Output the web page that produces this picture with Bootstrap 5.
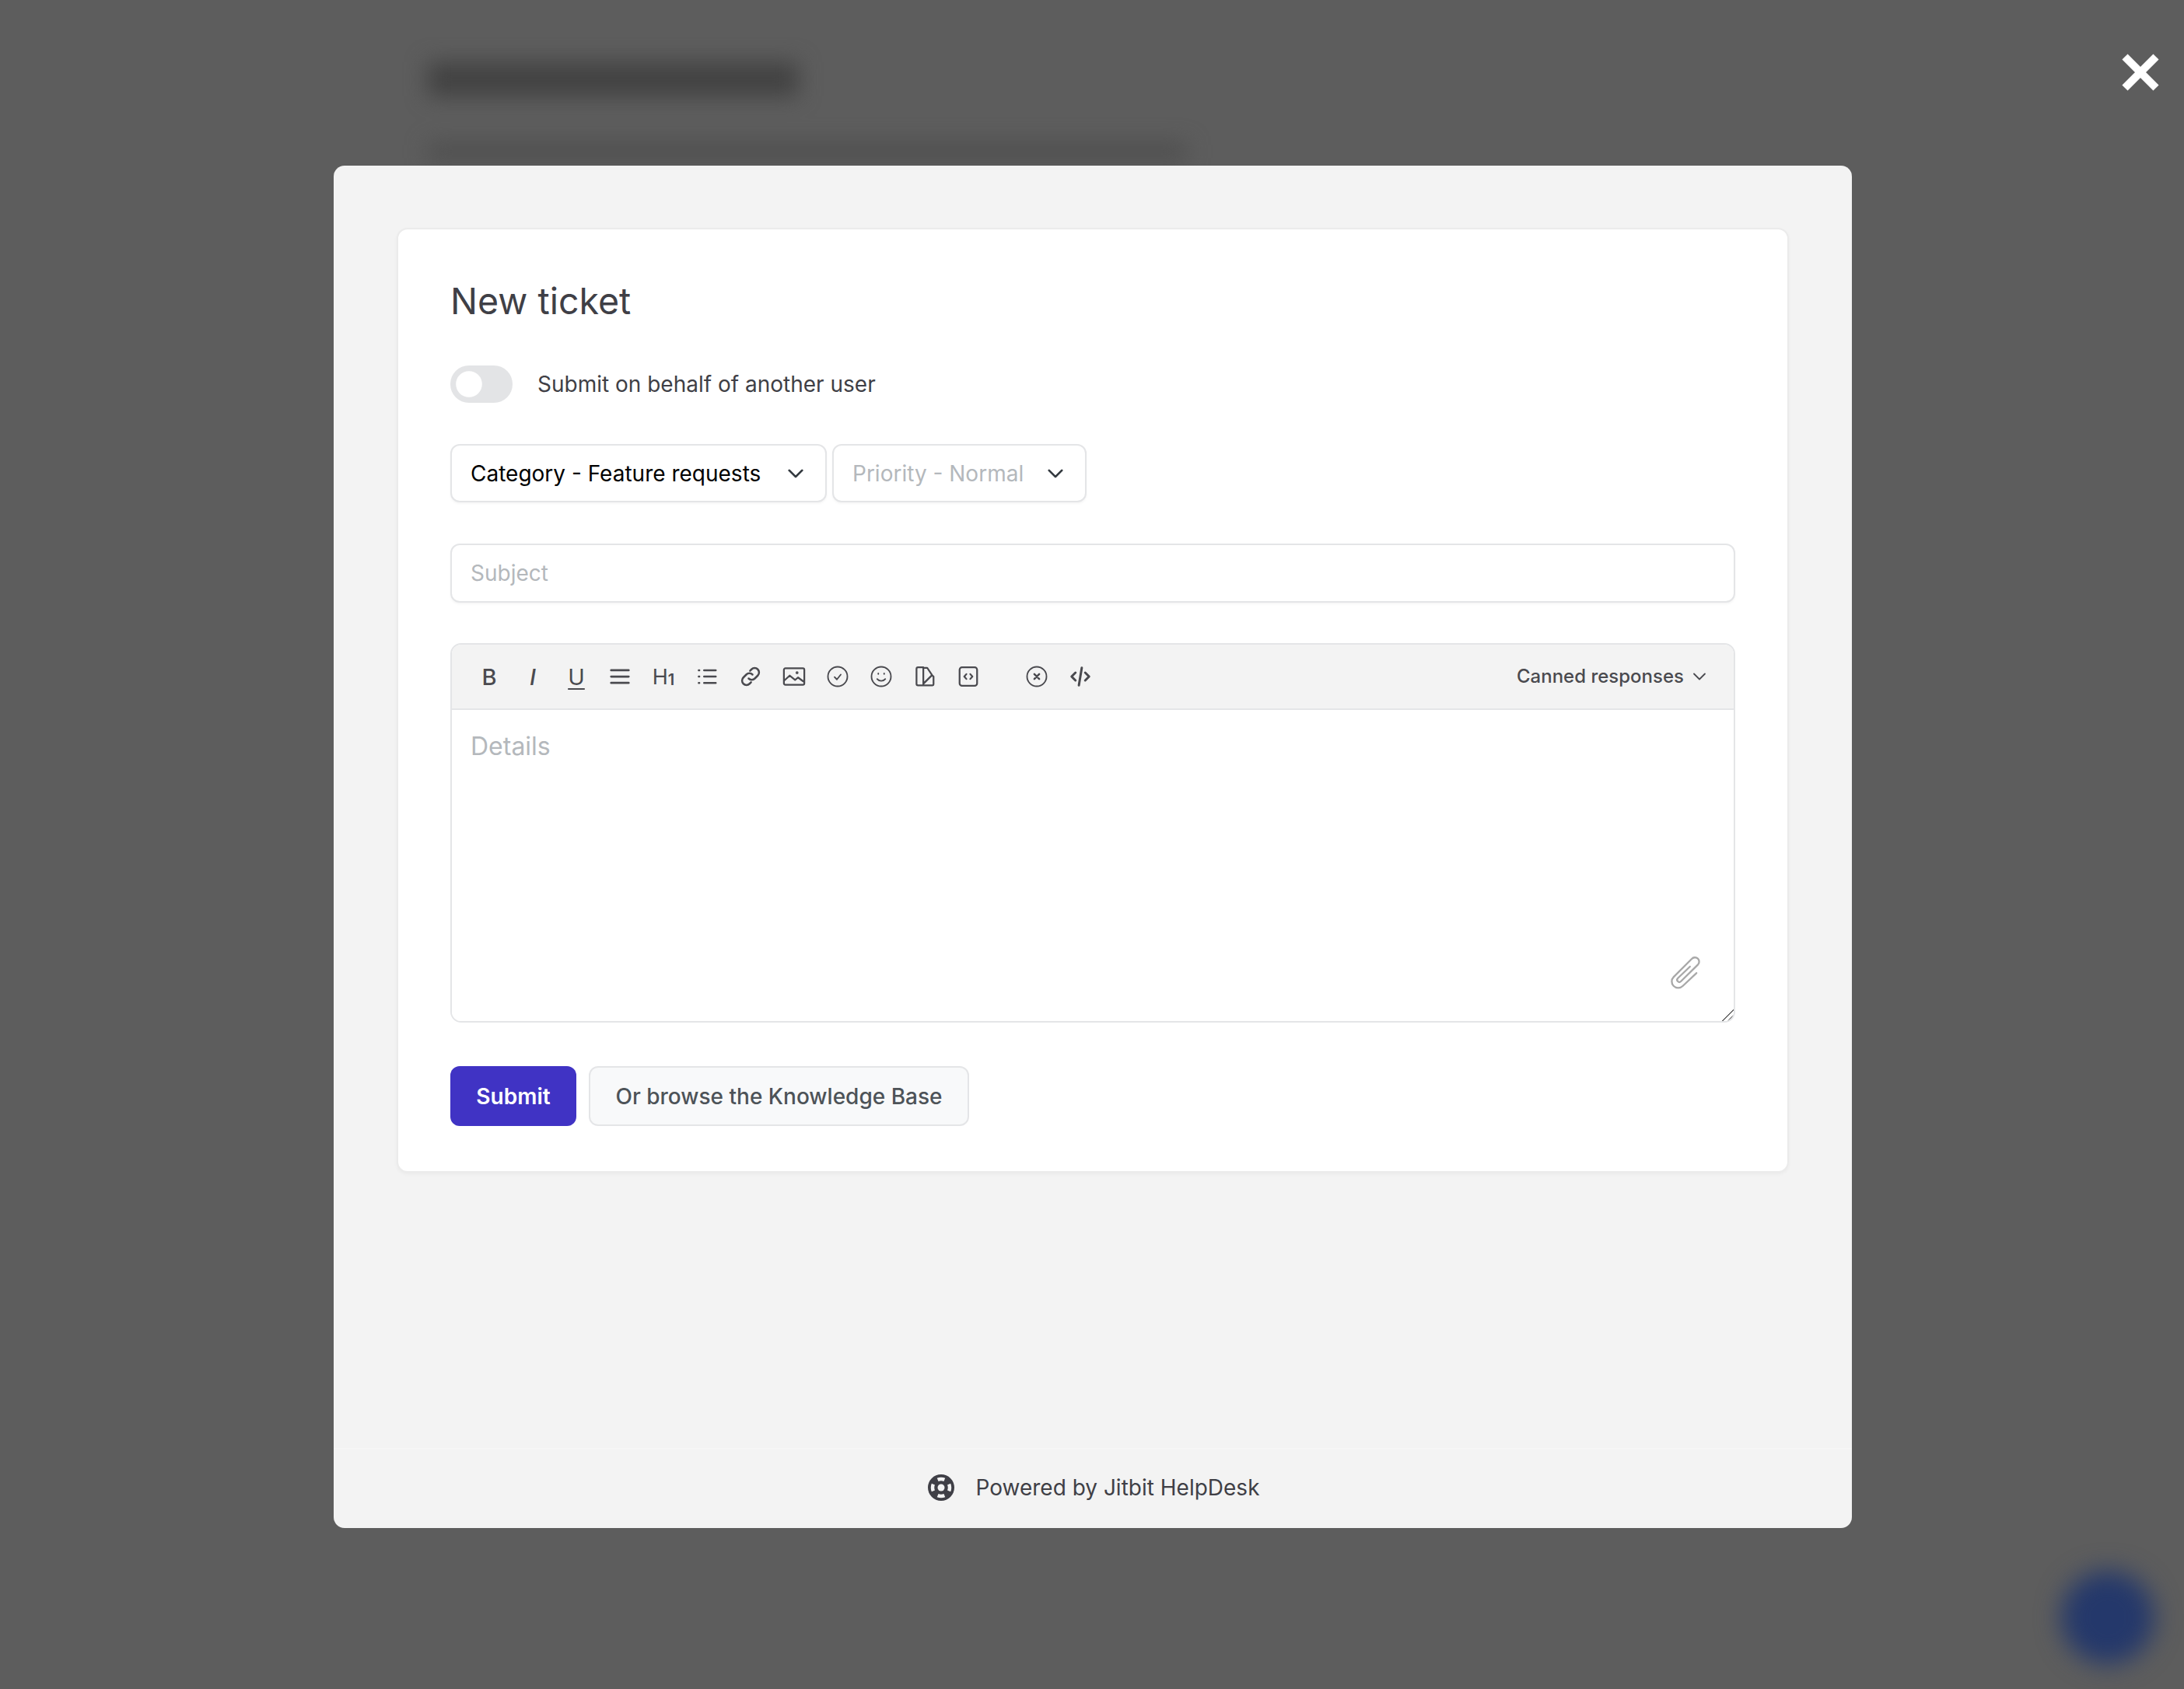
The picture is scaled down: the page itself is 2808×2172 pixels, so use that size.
<!DOCTYPE html>
<html lang="en">
<head>
    <meta charset="UTF-8">
    <title>New ticket</title>
    <link href="https://cdn.jsdelivr.net/npm/bootstrap@5.3.0/dist/css/bootstrap.min.css" rel="stylesheet">
    <style>
        html, body { height: 100%; }
        body {
            background: #5d5d5d;
            font-family: Inter, "Liberation Sans", sans-serif;
            color: #3f3f46;
            overflow: hidden;
        }
        .page-behind { padding: 80px 0 0 550px; filter: blur(14px); }
        .behind-title { width: 476px; height: 44px; background: #424242; }
        .behind-line { width: 976px; height: 22px; margin-top: 60px; background: #4e4e4e; }
        .chat-bubble {
            position: absolute; left: 2650px; top: 2020px;
            width: 120px; height: 120px; border-radius: 50%;
            background: #24386b; filter: blur(16px);
        }
        .overlay { position: absolute; inset: 0; }
        .close-x { position: absolute; left: 2726px; top: 67px; width: 52px; height: 52px; }
        .ticket-modal {
            width: 1952px; height: 1752px; margin: 213px 0 0 2px;
            background: #f3f3f3; border-radius: 14px;
        }
        .modal-pad { padding: 80px 81px 0 81px; }
        .ticket-card {
            border: 2px solid #ebebeb; border-radius: 14px;
            box-shadow: 0 2px 4px rgba(0,0,0,.04);
        }
        .ticket-card .card-body { padding: 62px 67px 58px; }
        .ticket-title { font-size: 46.5px; font-weight: 400; line-height: 60px; margin: 0 0 53px; color: #3f3f46; }
        .behalf { font-size: 28px; line-height: 48px; }
        .form-switch.behalf-switch { padding: 0; margin: 0 32px 0 0; min-height: 48px; }
        .form-switch.behalf-switch .form-check-input {
            width: 80px; height: 48px; margin: 0; border: 0; float: none; display: block;
            background-color: #e3e4e6;
            background-image: url("data:image/svg+xml,%3csvg xmlns='http://www.w3.org/2000/svg' viewBox='-4 -4 8 8'%3e%3ccircle r='2.8' fill='%23fff'/%3e%3c/svg%3e");
        }
        .pick-row { margin-top: 53px; gap: 7px; }
        .pick {
            width: auto; height: 75px; font-size: 28px; color: #000;
            padding: 0 60px 0 24px;
            border: 2px solid #e4e5e7; border-radius: 12px;
            background-position: right 23px center; background-size: 30px 22px;
            box-shadow: 0 2px 3px rgba(0,0,0,.04);
        }
        .pick-category { width: 484px; }
        .pick-priority { width: 327px; color: #b4b8bc; }
        .subject {
            margin-top: 53px; height: 76px; font-size: 28px;
            padding: 0 24px; border: 2px solid #e4e5e7; border-radius: 12px;
            box-shadow: 0 2px 3px rgba(0,0,0,.04);
        }
        .subject::placeholder, .details::placeholder { color: #b4b8bc; }
        .editor {
            margin-top: 52px; border: 2px solid #e4e5e7; border-radius: 14px;
            overflow: hidden; position: relative; height: 488px;
        }
        .editor-bar {
            height: 84px; padding: 0 34px 0 20px;
            background: #f3f3f3; border-bottom: 2px solid #e4e5e7;
        }
        .tool { width: 56px; height: 56px; color: #4a4a4f; font-size: 29px; line-height: 1; }
        .tool svg { width: 30px; height: 30px; fill: none; stroke: currentColor; stroke-width: 1.8; stroke-linecap: round; stroke-linejoin: round; }
        .tool-gap { margin-left: 32px; }
        .tool-u { text-decoration: underline; text-underline-offset: 4px; text-decoration-thickness: 2px; }
        .tool-h { font-size: 27px; }
        .tool-h span { font-size: 20px; align-self: flex-end; margin-bottom: 14px; font-weight: 600; }
        .canned { font-size: 24px; font-weight: 500; color: #4a4a4f; gap: 10px; }
        .canned svg { width: 20px; height: 20px; fill: none; stroke: currentColor; stroke-width: 1.8; stroke-linecap: round; stroke-linejoin: round; }
        .details {
            display: block; width: 100%; height: 400px; border: 0; outline: 0;
            padding: 23px 24px; font-size: 32px; background: #fff; resize: vertical;
        }
        .details::-webkit-resizer {
            background: linear-gradient(135deg, transparent 48%, #6a6a6a 48%, #6a6a6a 55%, transparent 55%, transparent 72%, #6a6a6a 72%, #6a6a6a 79%, transparent 79%);
        }
        .clip { position: absolute; right: 41px; bottom: 40px; width: 42px; height: 45px; fill: none; stroke: #a8a8a8; stroke-width: 7; stroke-linecap: round; stroke-linejoin: round; }
        .action-row { margin-top: 56px; gap: 16px; }
        .btn-submit {
            height: 77px; width: 162px; padding: 0; font-size: 28px; font-weight: 600;
            background: #4033c4; border: 0; color: #fff; border-radius: 12px;
        }
        .btn-kb {
            height: 77px; width: 489px; padding: 0; font-size: 28px; font-weight: 500;
            background: #f8f9fa; border: 2px solid #e4e5e7; color: #4d5358; border-radius: 12px;
        }
        .powered { height: 103px; border-top: 2px solid #f6f6f6; font-size: 28px; gap: 28px; padding: 0 0 3px 2px; }
        .powered svg { width: 34px; height: 34px; }
    </style>
</head>
<body>
    <div class="page-behind">
        <div class="behind-title"></div>
        <div class="behind-line"></div>
    </div>
    <div class="chat-bubble"></div>

    <div class="overlay d-flex justify-content-center align-items-start">
        <svg class="close-x" viewBox="0 0 52 52"><path d="M6 6 L46 46 M46 6 L6 46" stroke="#fff" stroke-width="10" fill="none"/></svg>

        <div class="ticket-modal d-flex flex-column">
            <div class="modal-pad">
                <div class="card ticket-card">
                    <div class="card-body">
                        <h1 class="ticket-title">New ticket</h1>

                        <div class="d-flex align-items-center behalf">
                            <div class="form-check form-switch behalf-switch">
                                <input class="form-check-input" type="checkbox" role="switch" id="behalf">
                            </div>
                            <label for="behalf">Submit on behalf of another user</label>
                        </div>

                        <div class="d-flex pick-row">
                            <select class="form-select pick pick-category">
                                <option>Category - Feature requests</option>
                            </select>
                            <select class="form-select pick pick-priority">
                                <option>Priority - Normal</option>
                            </select>
                        </div>

                        <input type="text" class="form-control subject" placeholder="Subject">

                        <div class="editor">
                            <div class="editor-bar d-flex align-items-center">
                                <div class="tool d-flex align-items-center justify-content-center fw-medium">B</div>
                                <div class="tool d-flex align-items-center justify-content-center fst-italic fw-medium">I</div>
                                <div class="tool tool-u d-flex align-items-center justify-content-center">U</div>
                                <div class="tool d-flex align-items-center justify-content-center">
                                    <svg viewBox="0 0 24 24" style="stroke-width:2.2"><path d="M3 5.500h18M3 12h18M3 18.500h18"/></svg>
                                </div>
                                <div class="tool tool-h d-flex align-items-center justify-content-center">H<span>1</span></div>
                                <div class="tool d-flex align-items-center justify-content-center">
                                    <svg viewBox="0 0 24 24" style="stroke-width:2"><path d="M9 5.500h12M9 12h12M9 18.500h12M3.500 5.500h.6M3.500 12h.6M3.500 18.500h.6"/></svg>
                                </div>
                                <div class="tool d-flex align-items-center justify-content-center">
                                    <svg viewBox="0 0 24 24" style="stroke-width:2"><path d="M10 14a4.500 4.500 0 0 0 6.400 0l3-3a4.500 4.500 0 0 0-6.400-6.400l-1.500 1.500M14 10a4.500 4.500 0 0 0-6.400 0l-3 3a4.500 4.500 0 0 0 6.400 6.400l1.500-1.500"/></svg>
                                </div>
                                <div class="tool d-flex align-items-center justify-content-center">
                                    <svg viewBox="0 0 24 24"><rect x="1.500" y="3.500" width="21" height="17" rx="1.500"/><path d="M2 16l5.500-5 5.500 4.500 3-2.500 5.500 4"/><circle cx="15" cy="8" r=".6"/></svg>
                                </div>
                                <div class="tool d-flex align-items-center justify-content-center">
                                    <svg viewBox="0 0 24 24" style="stroke-width:1.5"><circle cx="12" cy="12" r="10"/><path d="M8.800 12.500l2.400 2.500 4-5"/></svg>
                                </div>
                                <div class="tool d-flex align-items-center justify-content-center">
                                    <svg viewBox="0 0 24 24" style="stroke-width:1.5"><circle cx="12" cy="12" r="10"/><path d="M7.800 14.500c2 2.600 6.400 2.600 8.400 0M9 8.800v.6M15 8.800v.6"/></svg>
                                </div>
                                <div class="tool d-flex align-items-center justify-content-center">
                                    <svg viewBox="0 0 24 24"><path d="M10.500 21H5a1.500 1.500 0 0 1-1.500-1.500V4A1.500 1.500 0 0 1 5 2.500h5.500zM10.500 3l4 0 5 7.500-9 9M10.500 21h9.500a1 1 0 0 0 1-1v-8l-2-1.500"/></svg>
                                </div>
                                <div class="tool d-flex align-items-center justify-content-center">
                                    <svg viewBox="0 0 24 24"><rect x="3" y="2.500" width="18" height="19" rx="2.500"/><path d="M10 9.500L7.800 12l2.200 2.500M14 9.500l2.200 2.500-2.200 2.500"/></svg>
                                </div>
                                <div class="tool tool-gap d-flex align-items-center justify-content-center">
                                    <svg viewBox="0 0 24 24" style="stroke-width:1.5"><circle cx="12" cy="12" r="10"/><path d="M9.500 9.500l5 5M14.500 9.500l-5 5" style="stroke-width:2"/></svg>
                                </div>
                                <div class="tool d-flex align-items-center justify-content-center">
                                    <svg viewBox="0 0 24 24" style="stroke-width:2.4"><path d="M7 8l-4 4 4 4M17 8l4 4-4 4M13.500 3l-3 18"/></svg>
                                </div>
                                <div class="canned d-flex align-items-center ms-auto">
                                    Canned responses
                                    <svg viewBox="0 0 20 20"><path d="M3 6.500l7 7 7-7"/></svg>
                                </div>
                            </div>
                            <textarea class="details" placeholder="Details"></textarea>
                            <svg class="clip" viewBox="135 85 125 135"><path d="M240 155L187 205A24 24 0 0 1 152 170L222 100A16 16 0 0 1 246 122L180 187A8 8 0 0 1 168 175L215 130"/></svg>
                        </div>

                        <div class="d-flex action-row">
                            <button class="btn btn-submit">Submit</button>
                            <button class="btn btn-kb">Or browse the Knowledge Base</button>
                        </div>
                    </div>
                </div>
            </div>

            <div class="powered mt-auto d-flex align-items-center justify-content-center">
                <svg viewBox="0 0 34 34">
                    <circle cx="17" cy="17" r="17" fill="#3f3f46"/>
                    <circle cx="17" cy="17" r="11" fill="none" stroke="#f3f3f3" stroke-width="4.500" pathLength="100" stroke-dasharray="13 12" stroke-dashoffset="6.500"/>
                    <circle cx="17" cy="17" r="4.500" fill="#f3f3f3"/>
                </svg>
                <span>Powered by Jitbit HelpDesk</span>
            </div>
        </div>
    </div>

    <script src="https://cdn.jsdelivr.net/npm/bootstrap@5.3.0/dist/js/bootstrap.bundle.min.js"></script>
</body>
</html>
